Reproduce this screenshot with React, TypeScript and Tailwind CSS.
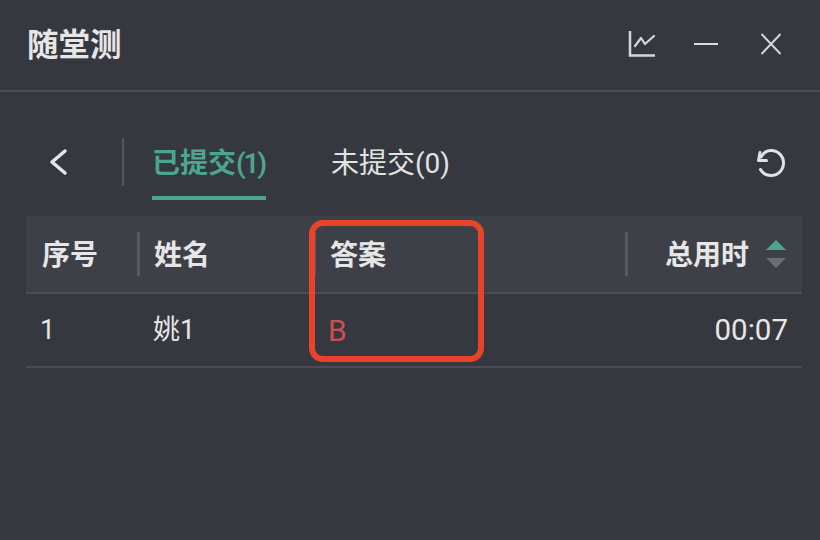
import React from "react";

const font = { fontFamily: '"Roboto","Noto Sans CJK SC",sans-serif' };

function Sep() {
  return <div className="w-[3px] h-11 bg-[#595b61] shrink-0" />;
}

export default function App() {
  return (
    <div
      className="relative w-[820px] h-[540px] overflow-hidden bg-[#36383f] text-[#e6e6e6]"
      style={font}
    >
      <header className="h-[92px] flex items-center pl-[27px] pr-[38px] border-b-2 border-[#4c4d52]">
        <h1 className="text-[31.500px] font-bold leading-none pt-[1px]">随堂测</h1>
        <div className="ml-auto mb-[3px] flex items-center text-[#d6d6d6]">
          <svg width="28" height="28" viewBox="0 0 28 28" fill="none" stroke="currentColor" strokeWidth="2.500">
            <path d="M2 1V25.500H27" />
            <path d="M7 16L13 8L17 14L26 6" strokeLinejoin="round" strokeLinecap="round" strokeWidth="2.200" />
          </svg>
          <div className="ml-[38px] w-6 h-[2px] bg-[#dcdcdc]" />
          <svg className="ml-[42px]" width="22" height="24" viewBox="0 0 22 24" fill="none" stroke="currentColor" strokeWidth="2">
            <path d="M1.500 2L20.500 22M20.500 2L1.500 22" />
          </svg>
        </div>
      </header>

      <div className="flex items-start h-[108px] pt-[46px] pl-[47px] pr-[34px]">
        <svg width="22" height="28" viewBox="0 0 22 28" className="mt-[10px]" fill="none" stroke="#e6e6e6" strokeWidth="3.500" strokeLinecap="round" strokeLinejoin="round">
          <path d="M18 3L5 14L18 25" />
        </svg>
        <div className="ml-[53px] w-[2px] h-12 bg-[#55575d]" />
        <div className="ml-[28px] h-[62px] w-[114px] border-b-4 border-[#4ba58f] text-[#4ba58f] text-[28px] font-semibold leading-[52px] whitespace-nowrap">
          已提交<span className="tracking-[-2.200px]">(1)</span>
        </div>
        <div className="ml-[65px] text-[28px] leading-[52px] text-[#e2e2e2] whitespace-nowrap">未提交(0)</div>
        <svg className="ml-auto mt-[10px]" width="30" height="30" viewBox="0 0 30 30" fill="none" stroke="#e2e2e2" strokeWidth="3" strokeLinejoin="round" strokeLinecap="round">
          <path d="M5 9C7.500 4.500 11 2.500 15 2.500C22 2.500 27.500 8 27.500 15C27.500 22 22 27.500 15 27.500C10 27.500 6.500 25 4.500 21.500" />
          <path d="M4 4.500L2.500 12.500H10.500" />
        </svg>
      </div>

      <section className="mx-[26px] mt-[16px] w-[776px]">
        <div className="h-[78px] flex items-center bg-[#3e4048] border-b-2 border-[#4c4d52] font-bold text-[28px]">
          <div className="w-[114px] pl-[16px] flex items-center justify-between">
            <span className="pt-[3px]">序号</span>
            <Sep />
          </div>
          <div className="w-[176px] pl-[14px] flex items-center justify-between">
            <span className="pt-[3px]">姓名</span>
            <Sep />
          </div>
          <div className="flex-1 pl-[14px] flex items-center justify-between">
            <span className="pt-[3px]">答案</span>
            <Sep />
          </div>
          <div className="w-[174px] flex items-center justify-end pr-[16px]">
            <span className="pt-[3px]">总用时</span>
            <div className="ml-[17px] flex flex-col gap-[8px]">
              <div className="w-5 h-[10px] bg-[#4ba58f] [clip-path:polygon(50%_0,100%_100%,0_100%)]" />
              <div className="w-5 h-[10px] bg-[#6c6d72] [clip-path:polygon(0_0,100%_0,50%_100%)]" />
            </div>
          </div>
        </div>
        <div className="h-[74px] flex items-center border-b-2 border-[#4c4d52] text-[27px]">
          <div className="w-[127px] pl-[14px]">1</div>
          <div className="w-[175px]">姚1</div>
          <div className="flex-1 text-[#cc4f50] text-[30px]">B</div>
          <div className="pr-[14px] text-[29.500px]">00:07</div>
        </div>
      </section>

      <div className="absolute left-[309px] top-[220px] w-[175px] h-[142px] rounded-[14px] border-[6px] border-[#e8432a]" />
    </div>
  );
}
